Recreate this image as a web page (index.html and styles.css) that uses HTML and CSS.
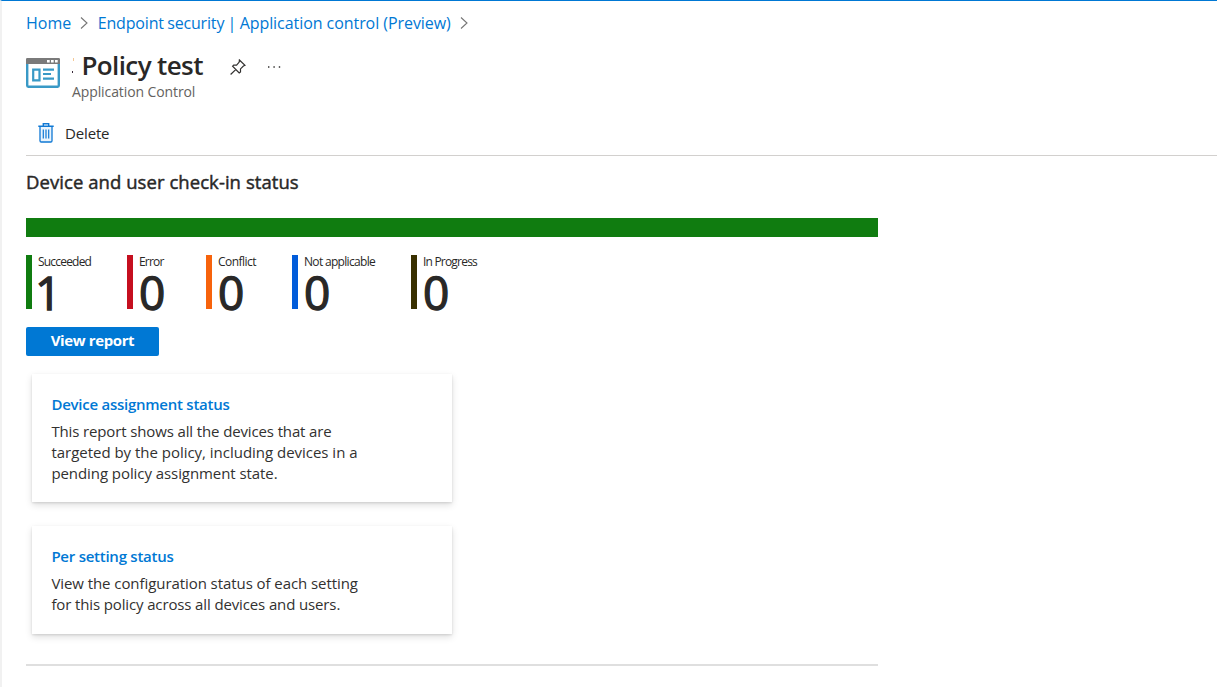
FILE: index.html
```html
<!DOCTYPE html>
<html lang="en">
<head>
<meta charset="utf-8">
<title>Policy test</title>
<link rel="stylesheet" href="styles.css">
</head>
<body>
<div class="page">
  <nav class="breadcrumb">
    <a class="crumb crumb-home">Home</a>
    <svg class="chevron" width="9" height="14" viewBox="0 0 9 14"><path d="M1 1.5 7 7 1 12.5"/></svg>
    <a class="crumb crumb-section"><span class="crumb-lead">Endpoint security | </span>Application control (Preview)</a>
    <svg class="chevron" width="9" height="14" viewBox="0 0 9 14"><path d="M1 1.5 7 7 1 12.5"/></svg>
  </nav>

  <header class="header">
    <svg class="header-icon" width="34" height="30" viewBox="0 0 34 30">
      <path d="M1.2 6V27.6a1.1 1.1 0 0 0 1.1 1.1H31.7a1.1 1.1 0 0 0 1.1-1.1V6" fill="#fff" stroke="#3999c6" stroke-width="2.4"/>
      <path d="M0 6V1.2A1.2 1.2 0 0 1 1.2 0H32.8A1.2 1.2 0 0 1 34 1.2V6Z" fill="#7a7a7a"/>
      <path d="M21 2h2.7v2.5H21zM25 2h2.7v2.5H25zM29 2h2.7v2.5H29z" fill="#fff"/>
      <path d="M7.2 11.7h6.3v10.6H7.2z" fill="none" stroke="#3999c6" stroke-width="2.2"/>
      <path d="M17 11.7h11M17 16h8M17 20.7h11" fill="none" stroke="#3999c6" stroke-width="2.2"/>
    </svg>
    <div class="header-text">
      <div class="title-row">
        <svg class="clipped-mark" width="3" height="16" viewBox="0 0 3 16"><path d="M1 0h1v3H1z" fill="#f4c896"/><path d="M0 13h1v2H0z" fill="#3a2a3a"/></svg>
        <h1 class="title">Policy test</h1>
        <svg class="pin" width="16" height="16" viewBox="0 0 16 16"><path d="M9.4 1 15 6.3 13.4 7 10.5 9.9V13L9.2 14 2.6 7.2 3.7 6 6.6 6.1 9.2 3.1ZM5.7 10.6.6 15.5"/></svg>
        <svg class="more" width="13" height="2" viewBox="0 0 13 2"><path d="M0 .3h1.4v1.4H0zM5.4.3h1.4v1.4H5.4zM10.8.3h1.4v1.4h-1.4z"/></svg>
      </div>
      <div class="subtitle">Application Control</div>
    </div>
  </header>

  <div class="toolbar">
    <svg class="trash" width="16" height="20" viewBox="0 0 16 20">
      <path d="M2 3.5V17.8a1.2 1.2 0 0 0 1.2 1.2h9.6a1.2 1.2 0 0 0 1.2-1.2V3.5" fill="#eaf4fc" stroke="#0f78d4" stroke-width="1.3"/>
      <path d="M.3 3.2h15.4M5.3 3V.8h5.4V3" fill="none" stroke="#0f78d4" stroke-width="1.4"/>
      <path d="M5.3 6.5v9M8 6.5v9M10.7 6.5v9" fill="none" stroke="#0f78d4" stroke-width="1.2"/>
    </svg>
    <span class="toolbar-label">Delete</span>
  </div>

  <main class="content">
    <h2 class="heading">Device and user check-in status</h2>
    <div class="status-bar"></div>
    <div class="stats">
      <div class="stat succeeded"><span class="stat-label">Succeeded</span><span class="stat-value">1</span></div>
      <div class="stat error"><span class="stat-label">Error</span><span class="stat-value">0</span></div>
      <div class="stat conflict"><span class="stat-label">Conflict</span><span class="stat-value">0</span></div>
      <div class="stat not-applicable"><span class="stat-label">Not applicable</span><span class="stat-value">0</span></div>
      <div class="stat in-progress"><span class="stat-label">In Progress</span><span class="stat-value">0</span></div>
    </div>
    <button class="report-button">View report</button>
    <section class="card">
      <h3 class="card-title">Device assignment status</h3>
      <p class="card-text"><span class="tight">This report shows all the devices that are</span><br><span class="loose">targeted by the policy, including devices in a</span><br>pending policy assignment state.</p>
    </section>
    <section class="card card-setting">
      <h3 class="card-title">Per setting status</h3>
      <p class="card-text">View the configuration status of each setting<br><span class="tight">for this policy across all devices and users.</span></p>
    </section>
    <hr class="divider">
  </main>
</div>
</body>
</html>
```
FILE: styles.css
```css
* { box-sizing: border-box; }
body {
  margin: 0;
  background: #fff;
  color: #292827;
  font-family: "Segoe UI", "Open Sans", "Noto Sans", sans-serif;
}
.page {
  height: 687px;
  padding-left: 24px;
  border-top: 1px solid #0078d4;
  border-left: 2px solid #f1f1f1;
  overflow: hidden;
}
h1, h2, h3, p { margin: 0; }
.breadcrumb {
  display: flex;
  align-items: center;
  height: 44px;
  font-size: 16px;
  color: #0078d4;
  white-space: nowrap;
}
.crumb-section { margin-left: -.5px; letter-spacing: -.06px; }
.crumb-lead { letter-spacing: -.17px; word-spacing: -.6px; }
.chevron { margin: 0 9px; fill: none; stroke: #767676; stroke-width: 1.1; }
.header { display: flex; height: 66px; }
.header-icon { margin: 13px 12px 0 0; }
.title-row { display: flex; align-items: center; height: 42px; }
.clipped-mark { margin-right: 6.5px; }
.title { padding-bottom: 2px; font-size: 26px; line-height: 36px; font-weight: 600; letter-spacing: -.62px; }
.pin { margin: 2px 0 0 27.5px; fill: none; stroke: #323130; stroke-width: 1.2; }
.more { margin: 2px 0 0 22px; fill: #323130; }
.subtitle { font-size: 14px; line-height: 18px; margin-top: -4px; letter-spacing: -.1px; color: #646260; }
.toolbar {
  display: flex;
  align-items: center;
  height: 45px;
  padding-left: 11.5px;
  border-bottom: 1px solid #d2d0ce;
}
.toolbar-label { margin-left: 11.5px; font-size: 15px; letter-spacing: -.15px; }
.content { width: 852px; }
.heading {
  padding-top: 13px;
  font-size: 18.5px;
  line-height: 26px;
  font-weight: 400;
  letter-spacing: .06px;
  -webkit-text-stroke: .45px #292827;
}
.status-bar { height: 19px; margin-top: 23px; background: #107c10; }
.stats { display: flex; height: 54px; margin-top: 18px; }
.stat { display: flex; flex-direction: column; align-items: flex-start; padding-left: 6px; border-left: 6px solid; }
.stat-label { font-size: 12px; line-height: 14px; letter-spacing: -.8px; color: #292827; white-space: nowrap; }
.stat-value { font-size: 46px; line-height: 47px; font-weight: 400; color: #292827; -webkit-text-stroke: 1.3px #292827; }
.succeeded { width: 101px; border-color: #107c10; }
.succeeded .stat-value { margin-left: -3px; }
.error { width: 79px; border-color: #c50f1f; }
.conflict { width: 86px; border-color: #f7630c; }
.conflict .stat-label { letter-spacing: -.55px; }
.not-applicable { width: 119px; border-color: #015cda; }
.not-applicable .stat-label { letter-spacing: -.68px; }
.in-progress { border-color: #393000; }
.report-button {
  display: block;
  width: 133px;
  height: 29px;
  margin: 18px 0;
  padding: 0 0 2px;
  border: 0;
  border-radius: 2px;
  background: #0078d4;
  color: #fff;
  font: 700 15px/27px "Segoe UI", "Open Sans", "Noto Sans", sans-serif;
  letter-spacing: -.38px;
}
.card {
  width: 420px;
  margin: 0 0 24px 6px;
  padding: 19px 19.4px 18px;
  box-shadow: 0 3px 7px rgba(0,0,0,.13), 0 1px 2px rgba(0,0,0,.11);
}
.card-setting { padding-bottom: 19px; }
.card-title { font-size: 15px; line-height: 22px; font-weight: 600; letter-spacing: -.25px; color: #0078d4; }
.card-text { margin-top: 6px; font-size: 15px; line-height: 21px; letter-spacing: -.07px; color: #323130; white-space: nowrap; }
.tight { letter-spacing: -.13px; }
.loose { letter-spacing: -.02px; }
.divider { margin: 30px 0 0; border: 0; border-top: 2px solid #dfdfdf; }
```
